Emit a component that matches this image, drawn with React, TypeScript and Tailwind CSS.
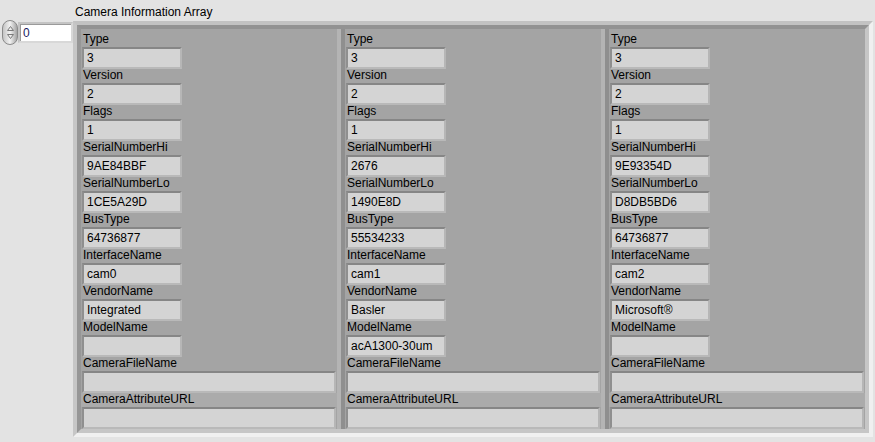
import React from 'react'

type Cam = {
  Type: string
  Version: string
  Flags: string
  SerialNumberHi: string
  SerialNumberLo: string
  BusType: string
  InterfaceName: string
  VendorName: string
  ModelName: string
  CameraFileName: string
  CameraAttributeURL: string
}

const cams: Cam[] = [
  {
    Type: '3', Version: '2', Flags: '1', SerialNumberHi: '9AE84BBF', SerialNumberLo: '1CE5A29D',
    BusType: '64736877', InterfaceName: 'cam0', VendorName: 'Integrated', ModelName: '',
    CameraFileName: '', CameraAttributeURL: '',
  },
  {
    Type: '3', Version: '2', Flags: '1', SerialNumberHi: '2676', SerialNumberLo: '1490E8D',
    BusType: '55534233', InterfaceName: 'cam1', VendorName: 'Basler', ModelName: 'acA1300-30um',
    CameraFileName: '', CameraAttributeURL: '',
  },
  {
    Type: '3', Version: '2', Flags: '1', SerialNumberHi: '9E93354D', SerialNumberLo: 'D8DB5BD6',
    BusType: '64736877', InterfaceName: 'cam2', VendorName: 'Microsoft®', ModelName: '',
    CameraFileName: '', CameraAttributeURL: '',
  },
]

const narrowKeys: (keyof Cam)[] = [
  'Type', 'Version', 'Flags', 'SerialNumberHi', 'SerialNumberLo', 'BusType',
  'InterfaceName', 'VendorName', 'ModelName',
]

// boîte de texte encastrée façon LabVIEW
function Box({ value, wide }: { value: string; wide?: boolean }) {
  return (
    <div
      className={`ml-px h-[22px] border-2 border-t-[#868686] border-l-[#8f8f8f] border-r-[#b6b6b6] border-b-[#b9b9b9] bg-[#d4d4d4] pl-[3px] text-[12px] leading-[18px] text-black whitespace-nowrap overflow-hidden ${wide ? 'w-[254px]' : 'w-[100px]'}`}
    >
      {value}
    </div>
  )
}

function Label({ text, band }: { text: string; band?: boolean }) {
  return (
    <div className={`h-[14px] pl-[2px] text-[12px] leading-[13px] text-black whitespace-nowrap ${band ? 'bg-[#ababab]' : ''}`}>
      {text}
    </div>
  )
}

function Cell({ cam }: { cam: Cam }) {
  return (
    <div className="w-[256px] bg-[#a4a4a4] pt-[4px]">
      {narrowKeys.map(k => (
        <div key={k}>
          <Label text={k} />
          <Box value={cam[k]} />
        </div>
      ))}
      <Label text="CameraFileName" />
      <Box value={cam.CameraFileName} wide />
      <Label text="CameraAttributeURL" band />
      <Box value={cam.CameraAttributeURL} wide />
    </div>
  )
}

function Separator() {
  return <div className="w-[8px] border-l-4 border-l-[#b4b4b4] border-r-4 border-r-[#8f8f8f]" />
}

export default function App() {
  return (
    <div
      className="w-[875px] h-[442px] bg-[#e3e3e3] flex overflow-hidden"
      style={{ fontFamily: '"Liberation Sans", Arial, sans-serif' }}
    >
      {/* Index du tableau */}
      <div className="w-[73px] pt-[20px] pl-[2px]">
        <div className="flex items-center">
          <div className="w-[16px] h-[25px] rounded-full border border-[#8a8a8a] bg-gradient-to-r from-[#c4c4c4] via-[#f2f2f2] to-[#a4a4a4] flex flex-col items-center justify-center gap-[3px]">
            <svg width="7" height="5" viewBox="0 0 7 5">
              <path d="M3.5 0.5 L6.5 4.5 L0.5 4.5 Z" fill="none" stroke="#7a7a7a" strokeWidth="1" />
            </svg>
            <svg width="7" height="5" viewBox="0 0 7 5">
              <path d="M0.5 0.5 L6.5 0.5 L3.5 4.5 Z" fill="none" stroke="#7a7a7a" strokeWidth="1" />
            </svg>
          </div>
          <div className="w-[55px] h-[21px] border-2 border-t-[#c4c4c4] border-l-[#c4c4c4] border-r-[#d8d8d8] border-b-[#d8d8d8]">
            <div className="h-full bg-white border-t border-l border-[#9a9a9a] pl-[2px] text-[12px] leading-[16px] text-[#1a1a60]">
              0
            </div>
          </div>
        </div>
      </div>

      <div className="flex flex-col">
        <div className="h-[21px] pt-[5px] pl-[2px] text-[12px] leading-[14px] text-black whitespace-nowrap">
          Camera Information Array
        </div>
        {/* Cadre du tableau */}
        <div className="w-[800px] border-4 border-t-[#c2c2c2] border-l-[#c6c6c6] border-r-[#f0f0f0] border-b-[#f0f0f0]">
          <div className="flex border-4 border-t-[#929292] border-l-[#969696] border-r-[#c6c6c6] border-b-[#c6c6c6]">
            <Cell cam={cams[0]} />
            <Separator />
            <Cell cam={cams[1]} />
            <Separator />
            <Cell cam={cams[2]} />
          </div>
        </div>
      </div>
    </div>
  )
}
